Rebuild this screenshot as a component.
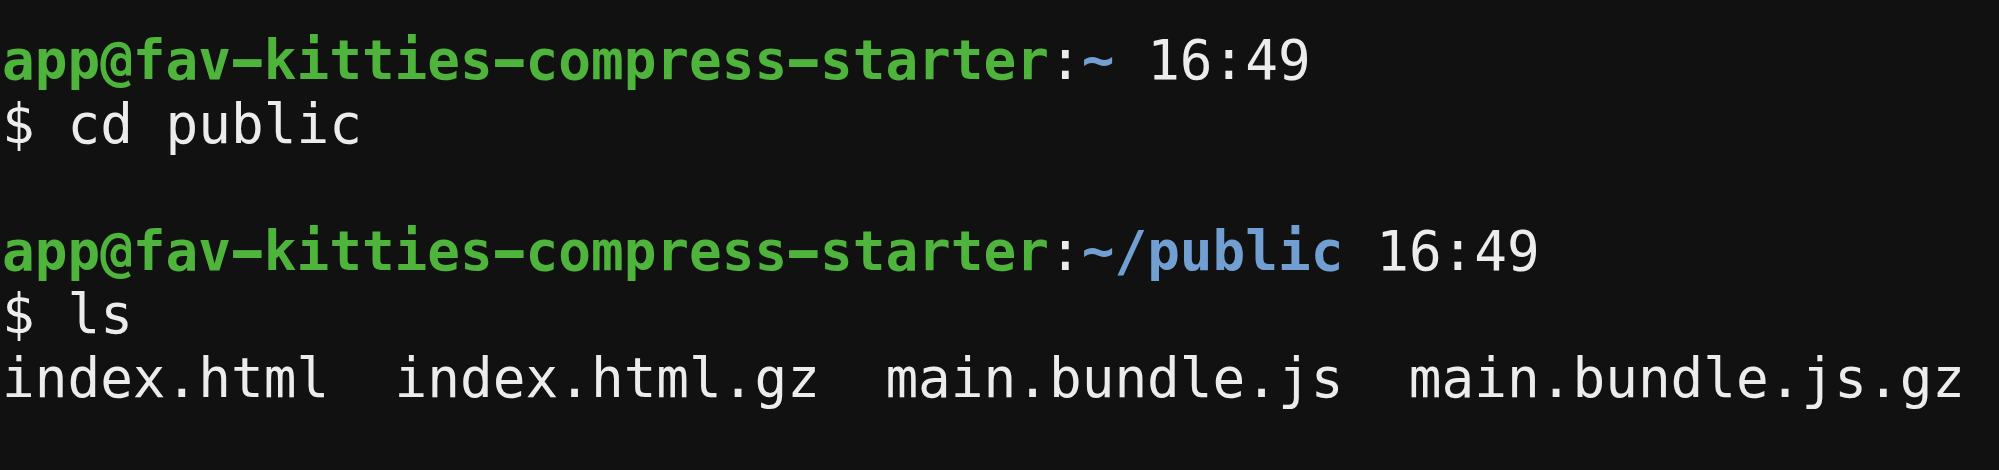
function H() {
  return <span className="inline-block scale-x-[1.7]">-</span>;
}

function Prompt({ path }: { path: string }) {
  const G = "text-[#4fb43c] font-bold";
  const B = "text-[#729fd1] font-bold";
  return (
    <div>
      <span className={G}>
        app@fav<H />kitties<H />compress<H />starter
      </span>
      <span>:</span>
      <span className={B}>{path}</span>
      <span> 16:49</span>
    </div>
  );
}

export default function App() {
  return (
    <div className="w-[1999px] h-[470px] bg-[#111111] text-[#ececec] overflow-hidden pt-[29px] pl-[2px] text-[54.35px] leading-[63.6px] whitespace-pre" style={{ fontFamily: '"DejaVu Sans Mono", monospace' }}>
      <Prompt path="~" />
      <div>$ cd public</div>
      <div>&nbsp;</div>
      <Prompt path="~/public" />
      <div>$ ls</div>
      <div>index.html  index.html.gz  main.bundle.js  main.bundle.js.gz</div>
    </div>
  );
}
